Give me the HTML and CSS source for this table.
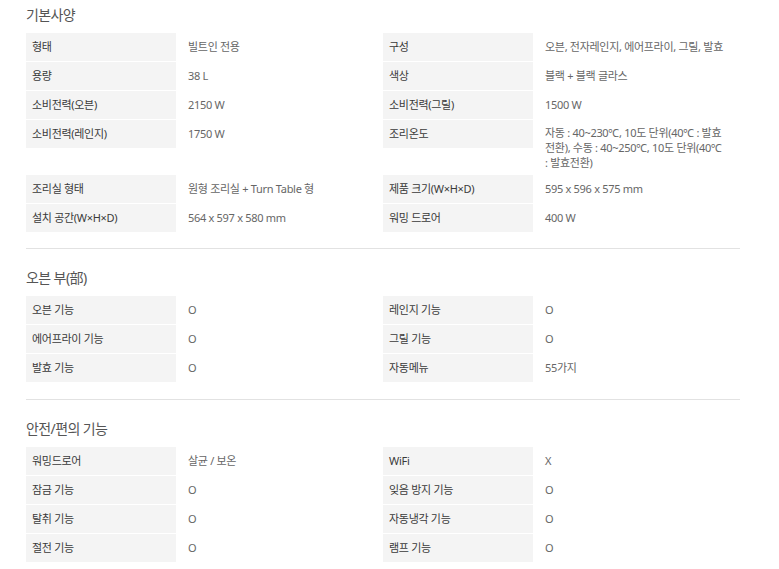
FILE: index.html
```html
<!DOCTYPE html>
<html lang="ko">
<head>
<meta charset="utf-8">
<title>제품 사양</title>
<link rel="stylesheet" href="styles.css">
</head>
<body>
<main class="specs">
  <section class="spec-section">
    <h2 class="spec-title">기본사양</h2>
    <div class="spec-grid">
      <div class="spec-item"><div class="spec-label">형태</div><div class="spec-value">빌트인 전용</div></div>
      <div class="spec-item"><div class="spec-label">구성</div><div class="spec-value">오븐, 전자레인지, 에어프라이, 그릴, 발효</div></div>
      <div class="spec-item"><div class="spec-label">용량</div><div class="spec-value">38 L</div></div>
      <div class="spec-item"><div class="spec-label">색상</div><div class="spec-value">블랙 + 블랙 글라스</div></div>
      <div class="spec-item"><div class="spec-label">소비전력(오븐)</div><div class="spec-value">2150 W</div></div>
      <div class="spec-item"><div class="spec-label">소비전력(그릴)</div><div class="spec-value">1500 W</div></div>
      <div class="spec-item"><div class="spec-label">소비전력(레인지)</div><div class="spec-value">1750 W</div></div>
      <div class="spec-item"><div class="spec-label">조리온도</div><div class="spec-value spec-value--multi">자동 : 40~230℃, 10도 단위(40℃ : 발효<br>전환), 수동 : 40~250℃, 10도 단위(40℃<br>: 발효전환)</div></div>
      <div class="spec-item"><div class="spec-label">조리실 형태</div><div class="spec-value">원형 조리실 + Turn Table 형</div></div>
      <div class="spec-item"><div class="spec-label">제품 크기(W×H×D)</div><div class="spec-value">595 x 596 x 575 mm</div></div>
      <div class="spec-item"><div class="spec-label">설치 공간(W×H×D)</div><div class="spec-value">564 x 597 x 580 mm</div></div>
      <div class="spec-item"><div class="spec-label">워밍 드로어</div><div class="spec-value">400 W</div></div>
    </div>
  </section>
  <section class="spec-section">
    <h2 class="spec-title">오븐 부(部)</h2>
    <div class="spec-grid">
      <div class="spec-item"><div class="spec-label">오븐 기능</div><div class="spec-value">O</div></div>
      <div class="spec-item"><div class="spec-label">레인지 기능</div><div class="spec-value">O</div></div>
      <div class="spec-item"><div class="spec-label">에어프라이 기능</div><div class="spec-value">O</div></div>
      <div class="spec-item"><div class="spec-label">그릴 기능</div><div class="spec-value">O</div></div>
      <div class="spec-item"><div class="spec-label">발효 기능</div><div class="spec-value">O</div></div>
      <div class="spec-item"><div class="spec-label">자동메뉴</div><div class="spec-value">55가지</div></div>
    </div>
  </section>
  <section class="spec-section">
    <h2 class="spec-title">안전/편의 기능</h2>
    <div class="spec-grid">
      <div class="spec-item"><div class="spec-label">워밍드로어</div><div class="spec-value">살균 / 보온</div></div>
      <div class="spec-item"><div class="spec-label">WiFi</div><div class="spec-value">X</div></div>
      <div class="spec-item"><div class="spec-label">잠금 기능</div><div class="spec-value">O</div></div>
      <div class="spec-item"><div class="spec-label">잊음 방지 기능</div><div class="spec-value">O</div></div>
      <div class="spec-item"><div class="spec-label">탈취 기능</div><div class="spec-value">O</div></div>
      <div class="spec-item"><div class="spec-label">자동냉각 기능</div><div class="spec-value">O</div></div>
      <div class="spec-item"><div class="spec-label">절전 기능</div><div class="spec-value">O</div></div>
      <div class="spec-item"><div class="spec-label">램프 기능</div><div class="spec-value">O</div></div>
    </div>
  </section>
</main>
</body>
</html>
```
FILE: styles.css
```css
html, body {
  margin: 0;
  padding: 0;
  background: #ffffff;
}

body {
  font-family: "Noto Sans", "Noto Sans CJK KR", sans-serif;
  font-size: 11px;
  letter-spacing: -0.3px;
  color: #666666;
}

.specs {
  width: 714px;
  margin-left: 26px;
  padding-top: 5px;
}

.spec-section {
  padding-bottom: 16px;
}

.spec-section + .spec-section {
  border-top: 1px solid #e2e2e2;
  padding-top: 19px;
}

.spec-section:nth-child(2) {
  padding-bottom: 17px;
}

.spec-title {
  margin: 0 0 8px;
  height: 20px;
  line-height: 20px;
  font-size: 14px;
  font-weight: 400;
  letter-spacing: -0.6px;
  color: #555555;
}

.spec-grid {
  display: grid;
  grid-template-columns: 357px 357px;
  row-gap: 1px;
}

.spec-item {
  display: flex;
  align-items: flex-start;
}

.spec-label {
  flex: 0 0 150px;
  box-sizing: border-box;
  height: 28px;
  line-height: 28px;
  padding-left: 6px;
  background: #f4f4f4;
  color: #3a3a3a;
  font-weight: 400;
  white-space: nowrap;
}

.spec-value {
  flex: 1;
  padding: 8px 12px;
  line-height: 12px;
  color: #666666;
}

.spec-value--multi {
  padding-top: 5px;
  padding-bottom: 4px;
  line-height: 15px;
  white-space: nowrap;
}
```
